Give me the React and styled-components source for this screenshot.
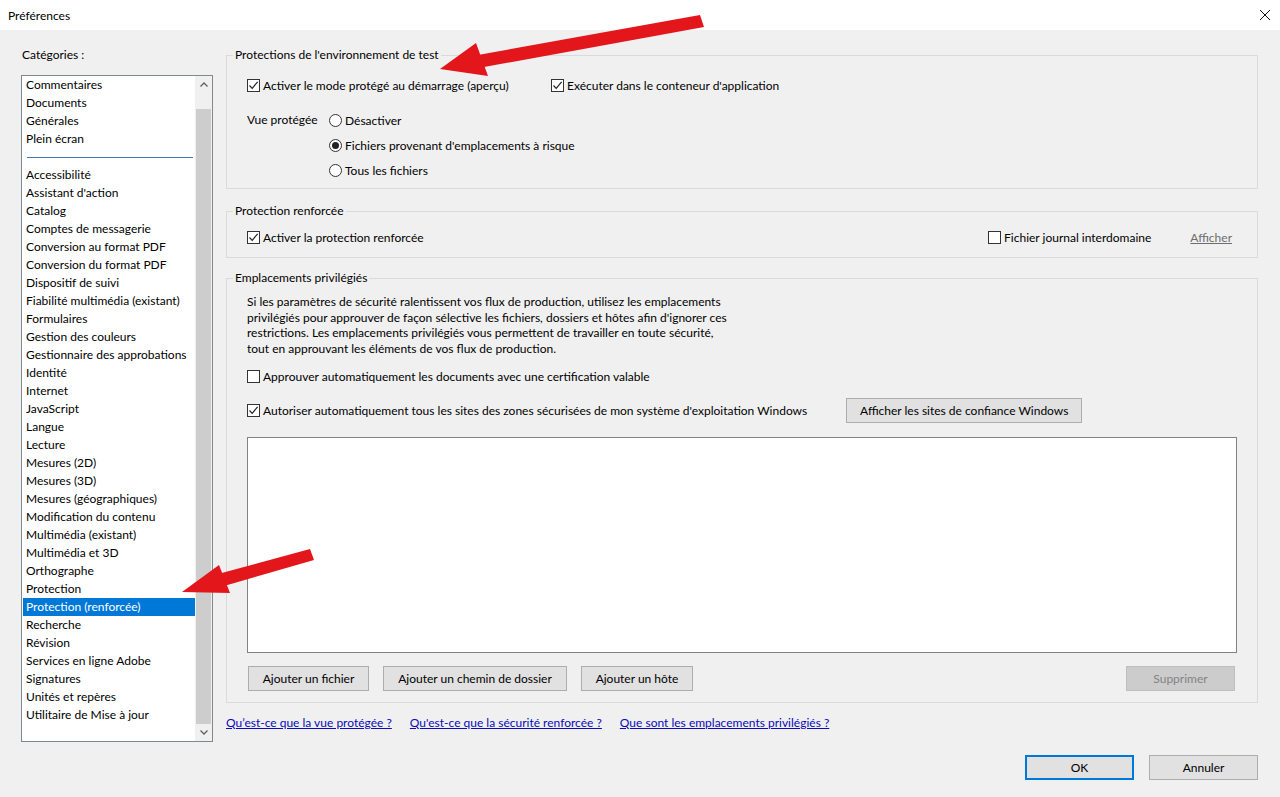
import styled, { createGlobalStyle } from "styled-components";

const GlobalStyle = createGlobalStyle`
  html, body {
    margin: 0;
    padding: 0;
    background: #f0f0f0;
    font-family: Lato, "Noto Sans", sans-serif;
    font-size: 12px;
    color: #000;
  }
  * { box-sizing: border-box; }
`;

const Window = styled.div`
  position: relative;
  width: 1280px;
  height: 797px;
  overflow: hidden;
  display: flex;
  flex-direction: column;
`;

const TitleBar = styled.div`
  height: 30px;
  flex: none;
  background: #fff;
  display: flex;
  align-items: center;
  justify-content: space-between;
  padding: 0 9px 0 8px;
`;

const Title = styled.span`
  font-size: 12px;
`;

const Body = styled.div`
  flex: 1;
  display: flex;
  gap: 13px;
  padding: 17px 22px 0 21px;
`;

const Sidebar = styled.div`
  width: 192px;
  flex: none;
  display: flex;
  flex-direction: column;
`;

const Label = styled.div`
  height: 16px;
  line-height: 16px;
  padding-left: 1px;
`;

const ListBox = styled.div`
  margin-top: 12px;
  height: 667px;
  border: 1px solid #828790;
  background: #fff;
  display: flex;
`;

const Items = styled.div`
  flex: 1;
  padding: 0 0 0 1px;
`;

const Item = styled.div`
  height: 18px;
  line-height: 18px;
  padding-left: 3px;
  white-space: nowrap;
  background: ${(p) => (p.selected ? "#0078d7" : "transparent")};
  color: ${(p) => (p.selected ? "#fff" : "#000")};
`;

const Separator = styled.div`
  height: 18px;
  display: flex;
  align-items: center;
  padding: 0 2px 0 4px;
  &::after {
    content: "";
    flex: 1;
    height: 1px;
    background: #3f7bb0;
  }
`;

const Scrollbar = styled.div`
  width: 17px;
  flex: none;
  background: #f0f0f0;
  display: flex;
  flex-direction: column;
`;

const ScrollArrow = styled.div`
  height: 17px;
  flex: none;
  display: flex;
  align-items: center;
  justify-content: center;
`;

const Thumb = styled.div`
  flex: 1;
  margin: 16px 1px 0 1px;
  background: #cdcdcd;
`;

const Main = styled.div`
  flex: 1;
  display: flex;
  flex-direction: column;
`;

const Group = styled.fieldset`
  margin: 0 0 ${(p) => p.$gap || 0}px 0;
  padding: 0;
  border: 1px solid #dadada;
  min-width: 0;
`;

const Legend = styled.legend`
  margin-left: 6px;
  padding: 0 2px;
  line-height: 16px;
`;

const GroupBody = styled.div`
  padding: ${(p) => p.$pad};
`;

const TwoCols = styled.div`
  display: grid;
  grid-template-columns: ${(p) => p.$cols};
  align-items: start;
`;

const Option = styled.label`
  display: flex;
  align-items: center;
  height: 20px;
  white-space: nowrap;
  gap: 3px;
`;

const Box = styled.span`
  width: 13px;
  height: 13px;
  flex: none;
  border: 1px solid #333;
  background: #fff;
  display: inline-flex;
  align-items: center;
  justify-content: center;
`;

const Radio = styled.span`
  width: 13px;
  height: 13px;
  flex: none;
  border: 1px solid #333;
  border-radius: 50%;
  background: #fff;
  display: inline-flex;
  align-items: center;
  justify-content: center;
  &::after {
    content: "";
    width: 7px;
    height: 7px;
    border-radius: 50%;
    background: ${(p) => (p.checked ? "#222" : "transparent")};
  }
`;

const RadioStack = styled.div`
  display: flex;
  flex-direction: column;
  gap: 5px;
`;

const FieldLabel = styled.div`
  height: 20px;
  line-height: 20px;
`;

const Row = styled.div`
  display: flex;
  align-items: center;
  margin-top: ${(p) => p.$top || 0}px;
  gap: ${(p) => p.$gap || 0}px;
`;

const RightSide = styled.div`
  margin-left: auto;
  display: flex;
  align-items: center;
  gap: 39px;
`;

const GrayLink = styled.span`
  color: #6d6d6d;
  text-decoration: underline;
`;

const Paragraph = styled.p`
  margin: 0;
  line-height: 15.7px;
  white-space: nowrap;
`;

const WhiteList = styled.div`
  margin-top: 14px;
  height: 216px;
  background: #fff;
  border: 1px solid #828282;
`;

const Button = styled.button`
  width: ${(p) => p.$w}px;
  height: 25px;
  flex: none;
  font: inherit;
  padding: 0;
  background: ${(p) => (p.disabled ? "#cccccc" : "#e1e1e1")};
  color: ${(p) => (p.disabled ? "#838383" : "#000")};
  border: ${(p) =>
    p.$default ? "2px solid #0078d7" : `1px solid ${p.disabled ? "#bfbfbf" : "#adadad"}`};
`;

const ButtonRow = styled.div`
  display: flex;
  gap: 14px;
  margin-top: 13px;
  padding: 0 2px 0 1px;
`;

const PushRight = styled.div`
  margin-left: auto;
  display: flex;
`;

const Links = styled.div`
  margin-top: 12px;
  display: flex;
  gap: 18px;
  line-height: 16px;
`;

const HelpLink = styled.a`
  color: #0b0bb8;
  text-decoration: underline;
`;

const Footer = styled.div`
  margin-top: 24px;
  display: flex;
  justify-content: flex-end;
  gap: 15px;
  padding-right: 0;
`;

const Overlay = styled.svg`
  position: absolute;
  left: 0;
  top: 0;
  pointer-events: none;
`;

const Check = ({ checked }) => (
  <Box>
    {checked && (
      <svg width="11" height="11" viewBox="0 0 11 11">
        <path d="M1.5 5.5 L4.2 8.3 L9.6 1.8" fill="none" stroke="#222" strokeWidth="1.2" />
      </svg>
    )}
  </Box>
);

const Chevron = ({ up }) => (
  <svg width="8" height="5" viewBox="0 0 8 5">
    <path
      d={up ? "M0.5 4.5 L4 1 L7.5 4.5" : "M0.5 0.5 L4 4 L7.5 0.5"}
      fill="none"
      stroke="#606060"
      strokeWidth="1.3"
    />
  </svg>
);

const top = ["Commentaires", "Documents", "Générales", "Plein écran"];
const categories = [
  "Accessibilité",
  "Assistant d'action",
  "Catalog",
  "Comptes de messagerie",
  "Conversion au format PDF",
  "Conversion du format PDF",
  "Dispositif de suivi",
  "Fiabilité multimédia (existant)",
  "Formulaires",
  "Gestion des couleurs",
  "Gestionnaire des approbations",
  "Identité",
  "Internet",
  "JavaScript",
  "Langue",
  "Lecture",
  "Mesures (2D)",
  "Mesures (3D)",
  "Mesures (géographiques)",
  "Modification du contenu",
  "Multimédia (existant)",
  "Multimédia et 3D",
  "Orthographe",
  "Protection",
  "Protection (renforcée)",
  "Recherche",
  "Révision",
  "Services en ligne Adobe",
  "Signatures",
  "Unités et repères",
  "Utilitaire de Mise à jour",
];

const Arrow = ({ shaft, head }) => (
  <g>
    <path d={shaft} fill="#e3161b" />
    <path d={head} fill="#e3161b" />
  </g>
);

export default function App() {
  return (
    <Window>
      <GlobalStyle />
      <TitleBar>
        <Title>Préférences</Title>
        <svg width="12" height="12" viewBox="0 0 12 12">
          <path d="M1 1 L11 11 M11 1 L1 11" stroke="#111" strokeWidth="1" />
        </svg>
      </TitleBar>
      <Body>
        <Sidebar>
          <Label>Catégories :</Label>
          <ListBox>
            <Items>
              {top.map((c) => (
                <Item key={c}>{c}</Item>
              ))}
              <Separator />
              {categories.map((c) => (
                <Item key={c} selected={c === "Protection (renforcée)"}>
                  {c}
                </Item>
              ))}
            </Items>
            <Scrollbar>
              <ScrollArrow>
                <Chevron up />
              </ScrollArrow>
              <Thumb />
              <ScrollArrow>
                <Chevron />
              </ScrollArrow>
            </Scrollbar>
          </ListBox>
        </Sidebar>

        <Main>
          <Group $gap={14}>
            <Legend>Protections de l'environnement de test</Legend>
            <GroupBody $pad="12px 20px 8px 20px">
              <TwoCols $cols="304px auto">
                <Option>
                  <Check checked />
                  Activer le mode protégé au démarrage (aperçu)
                </Option>
                <Option>
                  <Check checked />
                  Exécuter dans le conteneur d'application
                </Option>
              </TwoCols>
              <Row $top={15}>
                <TwoCols $cols="82px auto">
                  <FieldLabel>Vue protégée</FieldLabel>
                  <RadioStack>
                    <Option>
                      <Radio />
                      Désactiver
                    </Option>
                    <Option>
                      <Radio checked />
                      Fichiers provenant d'emplacements à risque
                    </Option>
                    <Option>
                      <Radio />
                      Tous les fichiers
                    </Option>
                  </RadioStack>
                </TwoCols>
              </Row>
            </GroupBody>
          </Group>

          <Group $gap={12}>
            <Legend>Protection renforcée</Legend>
            <GroupBody $pad="8px 25px 10px 20px">
              <Row>
                <Option>
                  <Check checked />
                  Activer la protection renforcée
                </Option>
                <RightSide>
                  <Option>
                    <Check />
                    Fichier journal interdomaine
                  </Option>
                  <GrayLink>Afficher</GrayLink>
                </RightSide>
              </Row>
            </GroupBody>
          </Group>

          <Group>
            <Legend>Emplacements privilégiés</Legend>
            <GroupBody $pad="8px 20px 11px 20px">
              <Paragraph>
                Si les paramètres de sécurité ralentissent vos flux de production, utilisez les emplacements
                <br />
                privilégiés pour approuver de façon sélective les fichiers, dossiers et hôtes afin d'ignorer ces
                <br />
                restrictions. Les emplacements privilégiés vous permettent de travailler en toute sécurité,
                <br />
                tout en approuvant les éléments de vos flux de production.
              </Paragraph>
              <Row $top={10}>
                <Option>
                  <Check />
                  Approuver automatiquement les documents avec une certification valable
                </Option>
              </Row>
              <Row $top={11} $gap={39}>
                <Option>
                  <Check checked />
                  Autoriser automatiquement tous les sites des zones sécurisées de mon système d'exploitation Windows
                </Option>
                <Button $w={236}>Afficher les sites de confiance Windows</Button>
              </Row>
              <WhiteList />
              <ButtonRow>
                <Button $w={121}>Ajouter un fichier</Button>
                <Button $w={184}>Ajouter un chemin de dossier</Button>
                <Button $w={112}>Ajouter un hôte</Button>
                <PushRight>
                  <Button $w={109} disabled>
                    Supprimer
                  </Button>
                </PushRight>
              </ButtonRow>
            </GroupBody>
          </Group>

          <Links>
            <HelpLink>Qu’est-ce que la vue protégée ?</HelpLink>
            <HelpLink>Qu'est-ce que la sécurité renforcée ?</HelpLink>
            <HelpLink>Que sont les emplacements privilégiés ?</HelpLink>
          </Links>

          <Footer>
            <Button $w={109} $default>
              OK
            </Button>
            <Button $w={109}>Annuler</Button>
          </Footer>
        </Main>
      </Body>

      <Overlay width="1280" height="797" viewBox="0 0 1280 797">
        <Arrow
          shaft="M478 55 L700 15 L704 27 L484 67 Z"
          head="M440 69 L476 43 L488 76 Z"
        />
        <Arrow
          shaft="M218 574 L310 549 L314 560 L224 586 Z"
          head="M182 592 L219 565 L230 593 Z"
        />
      </Overlay>
    </Window>
  );
}
